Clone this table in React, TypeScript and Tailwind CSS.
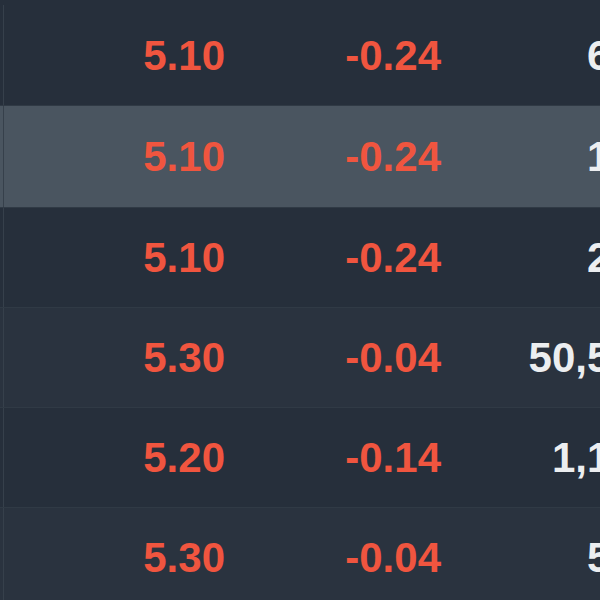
const rows = [
  { price: '5.10', change: '-0.24', volume: '600', bg: 'bg-[#262f3b]', h: 'h-[106px] pt-[5px]' },
  { price: '5.10', change: '-0.24', volume: '100', bg: 'bg-[#4a5560]', h: 'h-[102px]' },
  { price: '5.10', change: '-0.24', volume: '200', bg: 'bg-[#262f3b]', h: 'h-[100px]' },
  { price: '5.30', change: '-0.04', volume: '50,500', bg: 'bg-[#2a333f]', h: 'h-[100px]' },
  { price: '5.20', change: '-0.14', volume: '1,100', bg: 'bg-[#262f3b]', h: 'h-[100px]' },
  { price: '5.30', change: '-0.04', volume: '500', bg: 'bg-[#2a333f]', h: 'h-[100px]' },
];

export default function App() {
  return (
    <div className="h-[600px] w-[600px] overflow-hidden bg-[#262f3b] font-['Liberation_Sans',Arial,sans-serif]">
      <div className="w-[720px]">
        {rows.map((r, i) => (
          <div
            key={i}
            className={`flex items-center border-b border-[#303a45] text-[42px] font-bold ${r.bg} ${r.h}`}
          >
            <div className="h-full w-[4px] border-r border-[#36404b]" />
            <div className="w-[221px] text-right text-[#f0553f]">{r.price}</div>
            <div className="w-[216px] text-right text-[#f0553f]">{r.change}</div>
            <div className="w-[216px] text-right text-[#eceef0]">{r.volume}</div>
          </div>
        ))}
      </div>
    </div>
  );
}
